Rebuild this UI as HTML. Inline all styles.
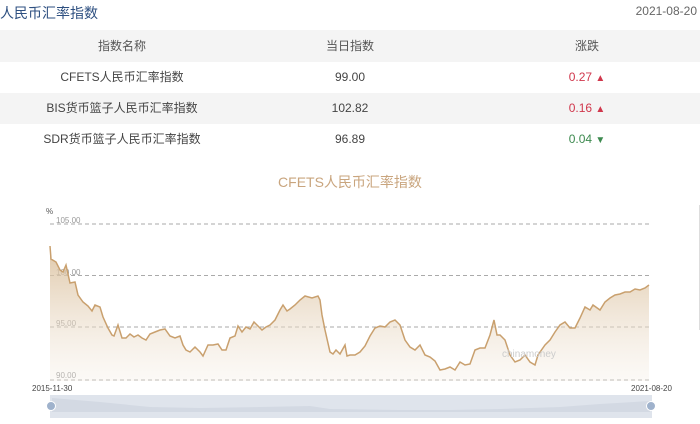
<!DOCTYPE html>
<html><head><meta charset="utf-8"><style>
html,body{margin:0;padding:0;background:#fff;width:700px;height:424px;overflow:hidden;font-family:"Liberation Sans","Noto Sans CJK SC",sans-serif;}
.t{position:absolute;left:0;top:3px;font-size:14px;color:#2d4f80;}
.d{position:absolute;right:3px;top:4px;font-size:12px;color:#666;}
.row{position:absolute;left:0;width:700px;height:31px;line-height:31px;font-size:12px;color:#444;}
.row span{position:absolute;top:0;transform:translateX(-50%);white-space:nowrap;}
.g{background:#f4f4f4;}
.up{color:#d0374c}.dn{color:#3d8a4f}
.tri{font-size:10px}
</style></head><body>
<div class="t">人民币汇率指数</div>
<div class="d">2021-08-20</div>
<div class="row g" style="top:30px;height:32px;line-height:32px;color:#555"><span style="left:122px">指数名称</span><span style="left:350px">当日指数</span><span style="left:587px">涨跌</span></div>
<div class="row" style="top:62px"><span style="left:122px">CFETS人民币汇率指数</span><span style="left:350px">99.00</span><span class="up" style="left:587px">0.27 <span class="tri" style="position:static;transform:none">▲</span></span></div>
<div class="row g" style="top:93px"><span style="left:122px">BIS货币篮子人民币汇率指数</span><span style="left:350px">102.82</span><span class="up" style="left:587px">0.16 <span class="tri" style="position:static;transform:none">▲</span></span></div>
<div class="row" style="top:124px"><span style="left:122px">SDR货币篮子人民币汇率指数</span><span style="left:350px">96.89</span><span class="dn" style="left:587px">0.04 <span class="tri" style="position:static;transform:none">▼</span></span></div>
<svg width="700" height="424" style="position:absolute;left:0;top:0" xmlns="http://www.w3.org/2000/svg">
<defs><linearGradient id="gr" x1="0" y1="0" x2="0" y2="1"><stop offset="0" stop-color="#d9bd98" stop-opacity="0.85"/><stop offset="1" stop-color="#f4ece2" stop-opacity="0.3"/></linearGradient></defs>
<text x="350" y="187" text-anchor="middle" font-size="14" fill="#c9a57e" font-family="Liberation Sans,Noto Sans CJK SC,sans-serif">CFETS人民币汇率指数</text>
<text x="46" y="214" font-size="8" fill="#555">%</text>
<g stroke="#aaa" stroke-dasharray="4,3" stroke-width="1">
<line x1="50" y1="224" x2="650" y2="224"/><line x1="50" y1="275.5" x2="650" y2="275.5"/><line x1="50" y1="327" x2="650" y2="327"/><line x1="50" y1="380" x2="650" y2="380"/></g>
<g font-size="8" fill="#999"><text x="56" y="223">105.00</text><text x="56" y="275">100.00</text><text x="56" y="326">95.00</text><text x="56" y="378">90.00</text></g>
<path d="M50,246 L51,259 56,262 60,270 63,272 66,265 70,283 75,282 78,295 83,302 88,306 92,311 95,305 100,307 103,317 108,328 112,335 114,336 118,325 122,338 126,338 130,334 134,337 138,335 142,338 146,340 150,334 155,332 160,330 165,329 170,336 175,338 180,336 183,345 186,350 190,352 195,347 200,352 203,356 208,345 213,345 218,344 222,350 226,350 230,338 235,336 238,326 242,332 246,327 250,329 254,322 258,326 262,330 266,327 270,325 275,320 280,310 283,305 287,311 290,309 295,305 300,300 305,296 312,298 318,296 320,300 322,315 325,330 330,352 333,354 336,350 340,354 345,345 347,356 350,355 355,355 360,352 365,346 370,336 375,328 380,326 385,327 390,322 395,320 400,325 405,340 410,347 415,350 420,345 425,355 430,357 435,361 440,370 445,369 450,367 455,370 460,362 465,365 470,364 475,350 480,348 485,348 490,335 494,320 497,335 500,335 505,340 510,355 515,362 520,360 525,355 530,362 535,365 538,355 545,345 550,340 555,332 560,325 565,322 570,328 575,328 580,318 585,307 590,310 593,305 600,310 605,302 610,298 615,295 620,294 625,292 630,292 635,289 640,290 645,288 649,285 L649,381 L50,381 Z" fill="url(#gr)"/>
<path d="M50,246 L51,259 56,262 60,270 63,272 66,265 70,283 75,282 78,295 83,302 88,306 92,311 95,305 100,307 103,317 108,328 112,335 114,336 118,325 122,338 126,338 130,334 134,337 138,335 142,338 146,340 150,334 155,332 160,330 165,329 170,336 175,338 180,336 183,345 186,350 190,352 195,347 200,352 203,356 208,345 213,345 218,344 222,350 226,350 230,338 235,336 238,326 242,332 246,327 250,329 254,322 258,326 262,330 266,327 270,325 275,320 280,310 283,305 287,311 290,309 295,305 300,300 305,296 312,298 318,296 320,300 322,315 325,330 330,352 333,354 336,350 340,354 345,345 347,356 350,355 355,355 360,352 365,346 370,336 375,328 380,326 385,327 390,322 395,320 400,325 405,340 410,347 415,350 420,345 425,355 430,357 435,361 440,370 445,369 450,367 455,370 460,362 465,365 470,364 475,350 480,348 485,348 490,335 494,320 497,335 500,335 505,340 510,355 515,362 520,360 525,355 530,362 535,365 538,355 545,345 550,340 555,332 560,325 565,322 570,328 575,328 580,318 585,307 590,310 593,305 600,310 605,302 610,298 615,295 620,294 625,292 630,292 635,289 640,290 645,288 649,285" fill="none" stroke="#c9a06e" stroke-width="1.5"/>
<text x="502" y="357" font-size="10" fill="#ccc">chinamoney</text>
<text x="32" y="391" font-size="8" fill="#444">2015-11-30</text>
<text x="631" y="391" font-size="8" fill="#444">2021-08-20</text>
<rect x="50" y="395" width="602" height="23" fill="#dfe4ec"/>
<path d="M52,398 L100,402 150,407 200,408 260,407 310,406 330,409 400,410 450,410 500,409 560,407 600,404 650,401 L650,412 L52,412 Z" fill="#d3d9e3"/>
<circle cx="51" cy="406" r="4.5" fill="#9fb2cc" stroke="#fff" stroke-width="1"/>
<circle cx="651" cy="406" r="4.5" fill="#9fb2cc" stroke="#fff" stroke-width="1"/>
<line x1="699.5" y1="205" x2="699.5" y2="330" stroke="#ddd"/>
</svg>
</body></html>
